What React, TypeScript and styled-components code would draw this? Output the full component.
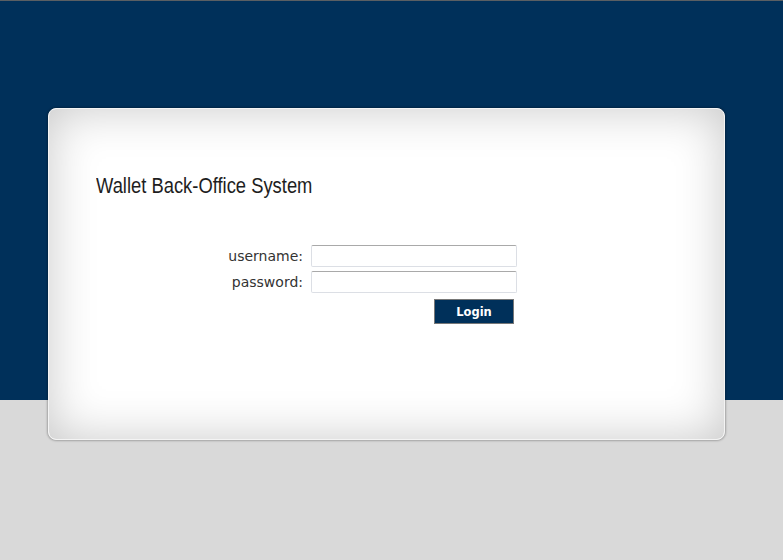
import React from "react";
import styled, { createGlobalStyle } from "styled-components";

const Global = createGlobalStyle`
  html, body { margin: 0; padding: 0; }
  body { font-family: "DejaVu Sans", Verdana, sans-serif; background: #d9d9d9; }
`;

const Page = styled.div`
  height: 560px;
  box-sizing: border-box;
  border-top: 1px solid #5b5f63;
  background: linear-gradient(to bottom, #00305a 0, #00305a 399px, #d9d9d9 399px, #d9d9d9 100%);
  padding-top: 107px;
  padding-left: 48px;
`;

const Card = styled.div`
  width: 677px;
  height: 332px;
  box-sizing: border-box;
  border: 1px solid #f4f4f4;
  border-radius: 8px;
  background: #ffffff;
  box-shadow: inset 0 0 48px rgba(0, 0, 0, 0.22), 0 0 2px 1px rgba(0, 0, 0, 0.25);
  padding: 64px 0 0 47px;
`;

const Title = styled.h1`
  margin: 0;
  font-family: "Liberation Sans", Arial, sans-serif;
  font-weight: normal;
  font-size: 22px;
  line-height: 26px;
  color: #1e1e1e;
  transform: scaleX(0.835);
  transform-origin: left center;
  white-space: nowrap;
`;

const Form = styled.form`
  margin: 46px 0 0 100px;
  display: grid;
  grid-template-columns: 107px 206px;
  column-gap: 8px;
  row-gap: 4px;
  align-items: center;
`;

const Label = styled.label`
  text-align: right;
  font-size: 14px;
  color: #333;
`;

const Input = styled.input`
  width: 206px;
  height: 22px;
  box-sizing: border-box;
  border: 1px solid #dcdfe5;
  border-top-color: #a9a9a9;
  border-radius: 2px;
  background: #fff;
  padding: 2px 4px;
  font-family: "DejaVu Sans", sans-serif;
  font-size: 13px;
  outline: none;
`;

const Actions = styled.div`
  grid-column: 2;
  display: flex;
  justify-content: flex-end;
  padding-right: 3px;
  margin-top: 2px;
`;

const Button = styled.button`
  width: 80px;
  height: 25px;
  background: #00305a;
  border: 1px solid #777;
  color: #fff;
  font-family: "DejaVu Sans", Verdana, sans-serif;
  font-weight: bold;
  font-size: 11.5px;
  padding: 0;
  cursor: pointer;
`;

export default function App() {
  return (
    <>
      <Global />
      <Page>
        <Card>
          <Title>Wallet Back-Office System</Title>
          <Form onSubmit={(e) => e.preventDefault()}>
            <Label htmlFor="u">username:</Label>
            <Input id="u" type="text" />
            <Label htmlFor="p">password:</Label>
            <Input id="p" type="password" />
            <Actions>
              <Button type="submit">Login</Button>
            </Actions>
          </Form>
        </Card>
      </Page>
    </>
  );
}
